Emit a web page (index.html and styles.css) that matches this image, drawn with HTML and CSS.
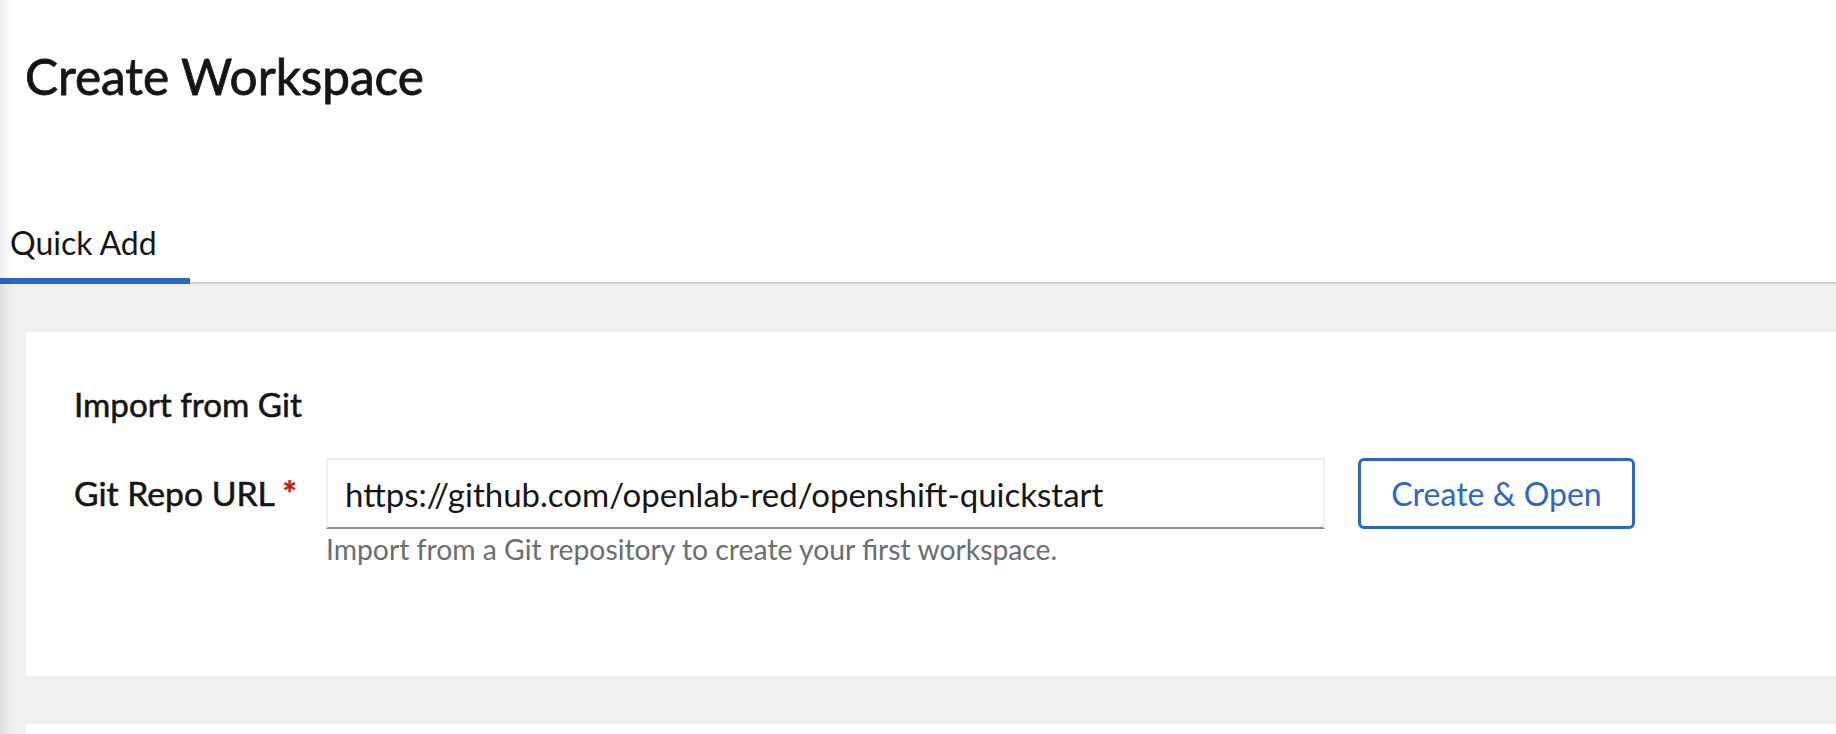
FILE: index.html
```html
<!DOCTYPE html>
<html lang="en">
<head>
<meta charset="utf-8">
<title>Create Workspace</title>
<link rel="stylesheet" href="styles.css">
</head>
<body>
<div class="page">
  <header class="page-header">
    <h1 class="page-title">Create Workspace</h1>
  </header>
  <nav class="tabs">
    <button class="tab tab-active">Quick Add</button>
  </nav>
  <main class="tab-body">
    <section class="card">
      <h2 class="card-title">Import from Git</h2>
      <div class="form-row">
        <label class="form-label" for="repo">Git Repo URL <span class="required">*</span></label>
        <div class="field">
          <div class="input-group">
            <input id="repo" class="text-input" type="text" value="https://github.com/openlab-red/openshift-quickstart">
            <button class="btn-secondary">Create &amp; Open</button>
          </div>
          <div class="helper">Import from a Git repository to create your first workspace.</div>
        </div>
      </div>
    </section>
    <section class="card card-next"></section>
  </main>
</div>
</body>
</html>
```

FILE: styles.css
```css
html, body {
  margin: 0;
  padding: 0;
  height: 100%;
  overflow: hidden;
}

body {
  font-family: "Lato", "Liberation Sans", sans-serif;
  color: #151515;
  background: #ffffff;
}

.page {
  position: relative;
  height: 100%;
  overflow: hidden;
}

.page::before {
  content: "";
  position: absolute;
  left: 0;
  top: 0;
  bottom: 0;
  width: 14px;
  background: linear-gradient(to right, rgba(0, 0, 0, 0.07), rgba(0, 0, 0, 0));
  pointer-events: none;
  z-index: 2;
}

.page-header {
  padding: 46px 0 0 25px;
  height: 207px;
  box-sizing: border-box;
}

.page-title {
  margin: 0;
  font-size: 49.5px;
  line-height: 60px;
  font-weight: 400;
  -webkit-text-stroke: 0.8px #151515;
  letter-spacing: 0;
}

.tabs {
  display: flex;
  border-bottom: 2px solid #d2d2d2;
}

.tab {
  font-family: inherit;
  font-size: 32px;
  line-height: 40px;
  color: #151515;
  background: none;
  border: none;
  border-bottom: 6px solid transparent;
  margin-bottom: -2px;
  padding: 16px 0 15px 10px;
  width: 190px;
  text-align: left;
  cursor: pointer;
}

.tab-active {
  border-bottom-color: #2b67c8;
}

.tab-body {
  background: #f0f0f0;
  padding: 48px 0 0 26px;
}

.card {
  background: #ffffff;
  padding: 48px 0 0 48px;
  height: 344px;
  box-sizing: border-box;
}

.card-next {
  margin-top: 48px;
  height: 10px;
  padding: 0;
}

.card-title {
  margin: 0 0 30px 0;
  font-size: 33.2px;
  line-height: 48px;
  font-weight: 400;
  -webkit-text-stroke: 0.55px #151515;
}

.form-row {
  display: grid;
  grid-template-columns: 220px auto;
  column-gap: 32px;
  align-items: start;
}

.form-label {
  font-size: 33.7px;
  line-height: 71px;
  font-weight: 400;
  -webkit-text-stroke: 0.55px #151515;
  white-space: nowrap;
}

.required {
  color: #c9190b;
  font-weight: 700;
  -webkit-text-stroke: 0.5px #c9190b;
}

.input-group {
  display: flex;
  align-items: stretch;
  gap: 33px;
}

.text-input {
  width: 999px;
  height: 71px;
  box-sizing: border-box;
  font-family: inherit;
  font-size: 33px;
  color: #151515;
  border: 2px solid #f0f0f0;
  border-bottom: 2px solid #8a8d90;
  padding: 0 16px 0 17px;
  margin: 0;
  outline: none;
  background: #fff;
}

.btn-secondary {
  width: 277px;
  height: 71px;
  box-sizing: border-box;
  font-family: inherit;
  font-size: 32px;
  color: #2b67c8;
  background: #fff;
  border: 3px solid #2b67c8;
  border-radius: 6px;
  padding: 0;
  cursor: pointer;
}

.helper {
  font-size: 28.3px;
  line-height: 36px;
  color: #6a6e73;
  margin-top: 2px;
}
```
